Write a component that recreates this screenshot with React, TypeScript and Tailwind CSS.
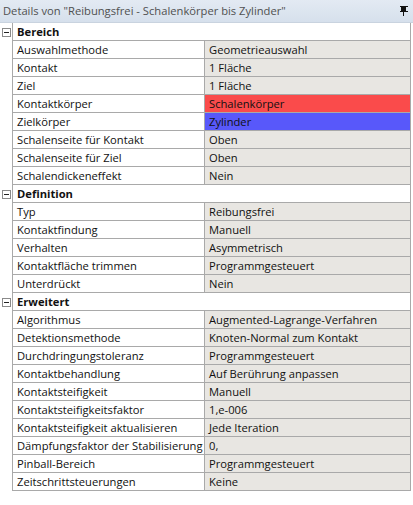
import React from "react";

type Row = { label: string; value: string; tone?: "red" | "blue" };
type Section = { title: string; rows: Row[] };

const sections: Section[] = [
  {
    title: "Bereich",
    rows: [
      { label: "Auswahlmethode", value: "Geometrieauswahl" },
      { label: "Kontakt", value: "1 Fläche" },
      { label: "Ziel", value: "1 Fläche" },
      { label: "Kontaktkörper", value: "Schalenkörper", tone: "red" },
      { label: "Zielkörper", value: "Zylinder", tone: "blue" },
      { label: "Schalenseite für Kontakt", value: "Oben" },
      { label: "Schalenseite für Ziel", value: "Oben" },
      { label: "Schalendickeneffekt", value: "Nein" },
    ],
  },
  {
    title: "Definition",
    rows: [
      { label: "Typ", value: "Reibungsfrei" },
      { label: "Kontaktfindung", value: "Manuell" },
      { label: "Verhalten", value: "Asymmetrisch" },
      { label: "Kontaktfläche trimmen", value: "Programmgesteuert" },
      { label: "Unterdrückt", value: "Nein" },
    ],
  },
  {
    title: "Erweitert",
    rows: [
      { label: "Algorithmus", value: "Augmented-Lagrange-Verfahren" },
      { label: "Detektionsmethode", value: "Knoten-Normal zum Kontakt" },
      { label: "Durchdringungstoleranz", value: "Programmgesteuert" },
      { label: "Kontaktbehandlung", value: "Auf Berührung anpassen" },
      { label: "Kontaktsteifigkeit", value: "Manuell" },
      { label: "Kontaktsteifigkeitsfaktor", value: "1,e-006" },
      { label: "Kontaktsteifigkeit aktualisieren", value: "Jede Iteration" },
      { label: "Dämpfungsfaktor der Stabilisierung", value: "0," },
      { label: "Pinball-Bereich", value: "Programmgesteuert" },
      { label: "Zeitschrittsteuerungen", value: "Keine" },
    ],
  },
];

function PinIcon() {
  return (
    <svg width="8" height="10" viewBox="0 0 8 10" className="block">
      <rect x="0" y="0" width="8" height="1" fill="#111" />
      <rect x="1" y="1" width="1" height="5" fill="#111" />
      <rect x="2" y="1" width="3" height="5" fill="#111" />
      <rect x="5" y="1" width="1" height="5" fill="#111" />
      <rect x="0" y="5" width="8" height="1" fill="#111" />
      <rect x="3" y="6" width="1" height="4" fill="#111" />
    </svg>
  );
}

function MinusBox() {
  return (
    <div className="w-[9px] h-[9px] border border-[#8a8a8a] bg-white flex items-center justify-center">
      <div className="w-[5px] h-px bg-[#222]" />
    </div>
  );
}

export default function App() {
  return (
    <div
      className="w-[413px] h-[505px] bg-white text-[11.2px] text-[#111] overflow-hidden"
      style={{ fontFamily: '"Open Sans", "Noto Sans", sans-serif' }}
    >
      <div className="h-[23px] flex items-center justify-between pl-[3px] pr-[5px] bg-gradient-to-b from-[#e3eaf3] to-[#d6e0ec] border-b border-[#c9d3df]">
        <span className="text-[11.2px] text-[#505050]">
          Details von "Reibungsfrei - Schalenkörper bis Zylinder"
        </span>
        <PinIcon />
      </div>

      <div className="flex flex-col w-[411px]">
        {sections.map((s) => (
          <div key={s.title} className="flex flex-col">
            <div className="flex h-[18px]">
              <div className="w-[12px] flex items-center justify-center pl-[1px]">
                <MinusBox />
              </div>
              <div className="flex-1 border-l border-r border-b border-[#a9a9a9] pl-[4px] font-bold leading-[17px]">
                {s.title}
              </div>
            </div>
            {s.rows.map((r) => (
              <div key={r.label} className="flex h-[18px]">
                <div className="w-[12px]" />
                <div className="w-[193px] border-l border-b border-r border-[#a9a9a9] pl-[4px] leading-[17px] whitespace-nowrap overflow-hidden">
                  {r.label}
                </div>
                <div
                  className={
                    "flex-1 border-b border-r border-[#a9a9a9] pl-[4px] leading-[17px] whitespace-nowrap " +
                    (r.tone === "red"
                      ? "bg-[#fa4b4b]"
                      : r.tone === "blue"
                      ? "bg-[#5858fa]"
                      : "bg-[#e8e6e2]")
                  }
                >
                  {r.value}
                </div>
              </div>
            ))}
          </div>
        ))}
      </div>
    </div>
  );
}
